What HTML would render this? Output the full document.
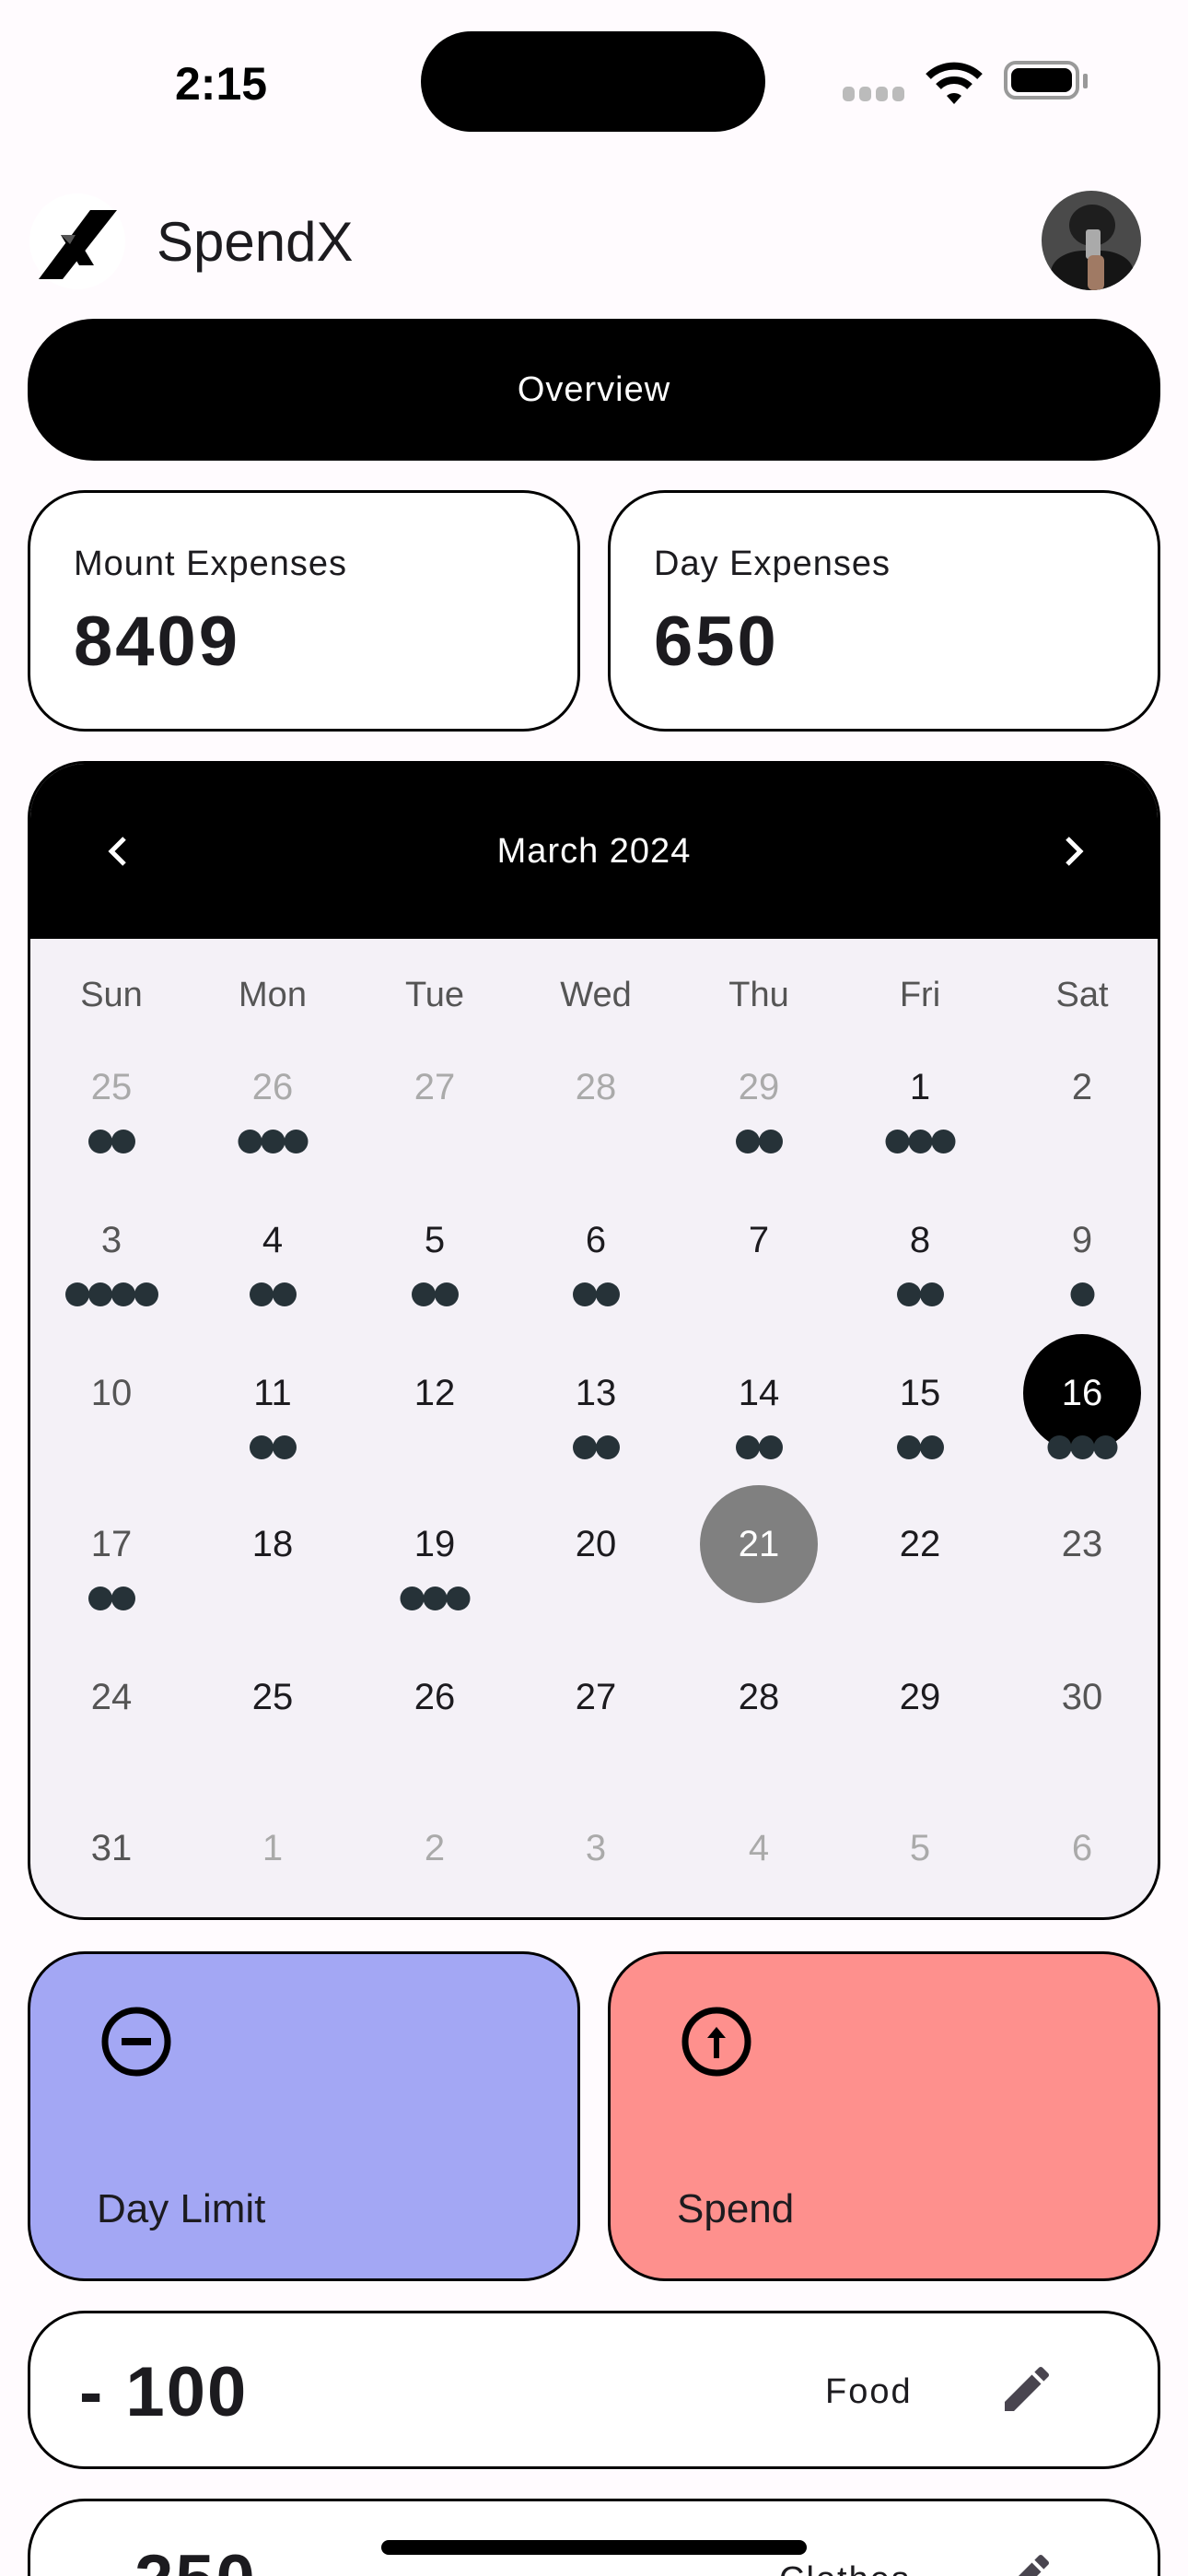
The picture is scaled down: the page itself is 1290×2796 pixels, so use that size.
<!DOCTYPE html>
<html><head><meta charset="utf-8">
<style>
*{margin:0;padding:0;box-sizing:border-box}
html,body{width:1290px;height:2796px;overflow:hidden}
body{background:#fffbfe;font-family:"Liberation Sans",sans-serif;color:#1c1b1f}
#root{position:relative;width:1290px;height:2796px;overflow:hidden}
.abs{position:absolute}
.card{position:absolute;border:3px solid #000;border-radius:62px;background:#fff}
.cal{position:absolute;left:30px;top:826px;width:1230px;height:1258px;border:3px solid #000;border-radius:62px;background:#f4f1f7;overflow:hidden}
.calh{position:absolute;left:0;top:0;width:100%;height:190px;background:#000}
.c{position:absolute;width:170px;text-align:center;transform:translateX(-50%);font-size:40px;line-height:40px}
.dots{position:absolute;transform:translateX(-50%);display:flex}
.dots i{width:26px;height:26px;border-radius:50%;background:#263238;display:block;margin-right:-1px}
</style></head><body><div id="root">
<div class="abs" style="left:190px;top:62px;font-size:50px;font-weight:bold;color:#000">2:15</div>
<div class="abs" style="left:457px;top:34px;width:374px;height:109px;border-radius:55px;background:#000"></div>
<div class="abs" style="left:915px;top:94px;display:flex;gap:5px"><span style="width:13px;height:16px;border-radius:5px;background:#bbb"></span><span style="width:13px;height:16px;border-radius:5px;background:#bbb"></span><span style="width:13px;height:16px;border-radius:5px;background:#bbb"></span><span style="width:13px;height:16px;border-radius:5px;background:#bbb"></span></div>
<svg class="abs" style="left:1005px;top:66px" width="62" height="48" viewBox="0 0 62 48"><path d="M3 17 A40 40 0 0 1 59 17" stroke="#000" stroke-width="8" fill="none"/><path d="M14 28 A24 24 0 0 1 48 28" stroke="#000" stroke-width="8" fill="none"/><path d="M23 38 L31 47 L39 38 A12 12 0 0 0 23 38Z" fill="#000"/></svg>
<div class="abs" style="left:1090px;top:66px;width:82px;height:42px;border:4px solid #999;border-radius:13px;padding:4px"><div style="width:100%;height:100%;background:#000;border-radius:8px"></div></div>
<div class="abs" style="left:1176px;top:80px;width:5px;height:16px;background:#999;border-radius:2px"></div>

<div class="abs" style="left:32px;top:210px;width:104px;height:104px;border-radius:50%;background:#fff"></div>
<svg class="abs" style="left:40px;top:225px" width="90" height="80" viewBox="0 0 90 80"><path d="M58 3 L87 3 L28 78 L2 78Z" fill="#000"/><path d="M26 30 L42 30 L62 63 L46 63Z" fill="#000"/><path d="M26 30 L42 30 L36 40Z" fill="#555"/></svg>
<div class="abs" style="left:170px;top:228px;font-size:60px;color:#1c1b1f">SpendX</div>
<div class="abs" style="left:1131px;top:207px;width:108px;height:108px;border-radius:50%;overflow:hidden;background:#4a4a4a">
<div class="abs" style="left:30px;top:15px;width:50px;height:45px;border-radius:50%;background:#1e1e1e"></div>
<div class="abs" style="left:10px;top:65px;width:90px;height:60px;border-radius:40% 40% 0 0;background:#151515"></div>
<div class="abs" style="left:48px;top:42px;width:16px;height:32px;background:#aaa;border-radius:3px"></div>
<div class="abs" style="left:50px;top:70px;width:18px;height:38px;background:#a07a64;border-radius:6px"></div>
</div>

<div class="abs" style="left:30px;top:346px;width:1230px;height:154px;border-radius:72px;background:#000;color:#fff;font-size:38px;text-align:center;line-height:154px;letter-spacing:1px">Overview</div>

<div class="card" style="left:30px;top:532px;width:600px;height:262px"><div class="abs" style="left:47px;top:56px;font-size:38px;letter-spacing:1px">Mount Expenses</div><div class="abs" style="left:47px;top:118px;font-size:76px;font-weight:bold;letter-spacing:3px">8409</div></div>
<div class="card" style="left:660px;top:532px;width:600px;height:262px"><div class="abs" style="left:47px;top:56px;font-size:38px;letter-spacing:1px">Day Expenses</div><div class="abs" style="left:47px;top:118px;font-size:76px;font-weight:bold;letter-spacing:3px">650</div></div>

<div class="cal"><div class="calh">
<svg class="abs" style="left:82px;top:77px" width="26" height="36" viewBox="0 0 26 36"><path d="M20 4 L6 18 L20 32" stroke="#fff" stroke-width="5" fill="none"/></svg>
<div class="abs" style="left:0;width:100%;top:74px;text-align:center;color:#fff;font-size:38px;letter-spacing:1px">March 2024</div>
<svg class="abs" style="left:1120px;top:77px" width="26" height="36" viewBox="0 0 26 36"><path d="M6 4 L20 18 L6 32" stroke="#fff" stroke-width="5" fill="none"/></svg>
</div>
<div id="g"></div>
</div>

<div class="card" style="left:30px;top:2118px;width:600px;height:358px;background:#a3a7f4"><svg class="abs" style="left:75px;top:55px" width="80" height="80" viewBox="0 0 80 80"><circle cx="40" cy="40" r="34" stroke="#000" stroke-width="7" fill="none"/><path d="M24 40 H56" stroke="#000" stroke-width="8"/></svg><div class="abs" style="left:72px;top:252px;font-size:44px;font-weight:500">Day Limit</div></div>
<div class="card" style="left:660px;top:2118px;width:600px;height:358px;background:#fe908d"><svg class="abs" style="left:75px;top:55px" width="80" height="80" viewBox="0 0 80 80"><circle cx="40" cy="40" r="34" stroke="#000" stroke-width="7" fill="none"/><path d="M40 58 V30" stroke="#000" stroke-width="6"/><path d="M30 36 L40 24 L50 36Z" fill="#000"/></svg><div class="abs" style="left:72px;top:252px;font-size:44px;font-weight:500">Spend</div></div>

<div class="card" style="left:30px;top:2508px;width:1230px;height:172px;border-radius:62px"><div class="abs" style="left:53px;top:42px;font-size:76px;font-weight:bold;letter-spacing:2px">- 100</div><div class="abs" style="left:863px;top:64px;font-size:38px;letter-spacing:2px">Food</div>
<svg class="abs" style="left:1050px;top:50px" width="64" height="64" viewBox="0 0 24 24"><path d="M3 17.25V21h3.75L17.81 9.94l-3.75-3.75L3 17.25zM20.71 7.04a1 1 0 0 0 0-1.41l-2.34-2.34a1 1 0 0 0-1.41 0l-1.83 1.83 3.75 3.75 1.83-1.83z" fill="#49454f"/></svg></div>
<div class="card" style="left:30px;top:2712px;width:1230px;height:172px;border-radius:62px"><div class="abs" style="left:113px;top:42px;font-size:76px;font-weight:bold;letter-spacing:2px">250</div><div class="abs" style="left:813px;top:64px;font-size:38px;letter-spacing:2px">Clothes</div>
<svg class="abs" style="left:1050px;top:50px" width="64" height="64" viewBox="0 0 24 24"><path d="M3 17.25V21h3.75L17.81 9.94l-3.75-3.75L3 17.25zM20.71 7.04a1 1 0 0 0 0-1.41l-2.34-2.34a1 1 0 0 0-1.41 0l-1.83 1.83 3.75 3.75 1.83-1.83z" fill="#49454f"/></svg></div>
<div class="abs" style="left:414px;top:2757px;width:462px;height:16px;border-radius:8px;background:#000"></div>
</div>
<script>
var g=document.getElementById('g'),cols=[88,263,439,614,791,966,1142],rows=[351,517,683,847,1013,1177];
var h='',names=['Sun','Mon','Tue','Wed','Thu','Fri','Sat'];
names.forEach(function(n,i){h+='<div class="c" style="left:'+cols[i]+'px;top:231px;color:#555;font-size:38px">'+n+'</div>';});
var days=[[25,26,27,28,29,1,2],[3,4,5,6,7,8,9],[10,11,12,13,14,15,16],[17,18,19,20,21,22,23],[24,25,26,27,28,29,30],[31,1,2,3,4,5,6]];
var dots=[[2,3,0,0,2,3,0],[4,2,2,2,0,2,1],[0,2,0,2,2,2,3],[2,0,3,0,0,0,0],[0,0,0,0,0,0,0],[0,0,0,0,0,0,0]];
for(var r=0;r<6;r++)for(var c=0;c<7;c++){
var d=days[r][c],other=(r==0&&c<5)||(r==5&&c>0);
var col=other?'#aaa':((c==0||c==6)?'#555':'#1c1b1f');
var y=rows[r];
if(r==2&&c==6){h+='<div class="abs" style="left:'+(cols[c]-64)+'px;top:'+(y-64)+'px;width:128px;height:128px;border-radius:50%;background:#000"></div>';col='#fff';}
if(r==3&&c==4){h+='<div class="abs" style="left:'+(cols[c]-64)+'px;top:'+(y-64)+'px;width:128px;height:128px;border-radius:50%;background:#808080"></div>';col='#fff';}
h+='<div class="c" style="left:'+cols[c]+'px;top:'+(y-20)+'px;color:'+col+'">'+d+'</div>';
if(dots[r][c]){var s='';for(var k=0;k<dots[r][c];k++)s+='<i></i>';h+='<div class="dots" style="left:'+cols[c]+'px;top:'+(y+46)+'px">'+s+'</div>';}
}
g.innerHTML=h;
</script>
</body></html>
